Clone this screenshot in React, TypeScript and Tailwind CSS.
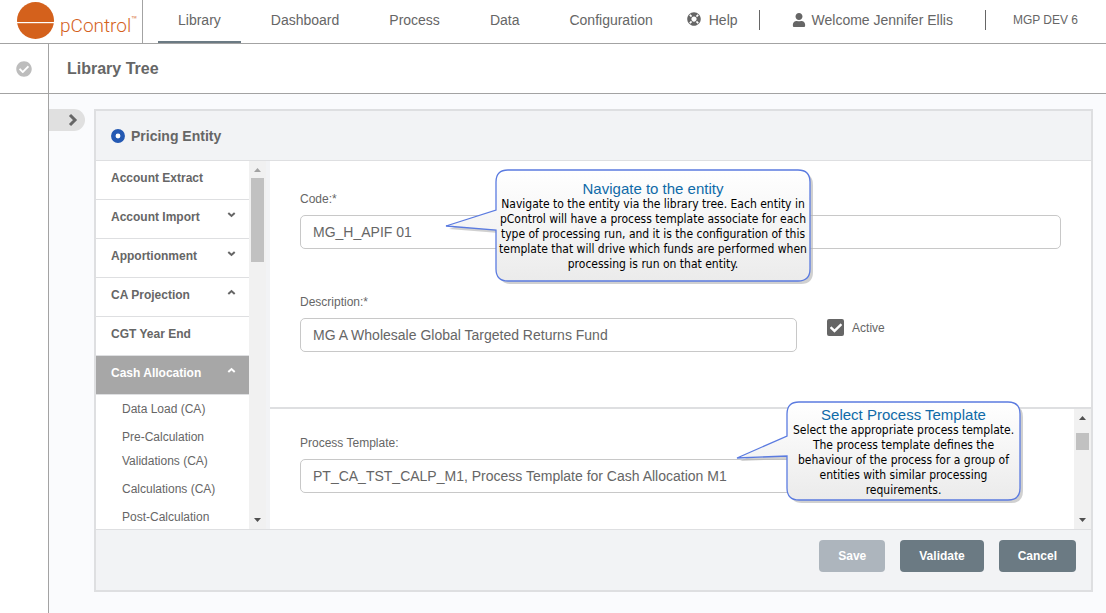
import { useState, type ReactNode } from "react";
import { FaCheck, FaCheckCircle, FaLifeRing, FaUser } from "react-icons/fa";

const NAV = ["Library", "Dashboard", "Process", "Data", "Configuration"];

type TreeItem = { label: string; state?: "open" | "closed"; active?: boolean };

const TREE: TreeItem[] = [
  { label: "Account Extract" },
  { label: "Account Import", state: "closed" },
  { label: "Apportionment", state: "closed" },
  { label: "CA Projection", state: "open" },
  { label: "CGT Year End" },
  { label: "Cash Allocation", state: "open", active: true },
];

const CHILDREN = ["Data Load (CA)", "Pre-Calculation Validations (CA)", "Calculations (CA)", "Post-Calculation"];

function Logo() {
  return (
    <a href="#home" className="flex w-[143px] shrink-0 items-start border-r border-[#a3a3a3] pl-[17px] pt-0.5">
      <svg width="38" height="38" viewBox="0 0 38 38" aria-hidden="true" className="shrink-0">
        <circle cx="18.5" cy="18.5" r="18.5" fill="#d4611c" />
        <rect x="0" y="20" width="38" height="1.2" fill="#fff" />
      </svg>
      <span className="flex items-start pl-[5px] pt-2 font-['Roboto',sans-serif] text-[19px] font-light leading-8 text-[#d4611c]">
        pControl<span className="text-[10px] leading-5">™</span>
      </span>
    </a>
  );
}

function Header() {
  return (
    <header className="flex h-11 shrink-0 border-b border-[#a3a3a3] bg-white text-sm whitespace-nowrap">
      <Logo />
      <nav className="ml-[15px] flex gap-2.5">
        {NAV.map((item, i) => (
          <a
            key={item}
            href={`#${item.toLowerCase()}`}
            className={
              i === 0
                ? "border-b-2 border-[#6b7a83] px-5 pt-2.5 leading-5"
                : "border-b-2 border-transparent px-5 pt-2.5 leading-5"
            }
          >
            {item}
          </a>
        ))}
      </nav>
      <div className="ml-3.5 flex flex-1 items-start pt-2.5 leading-5">
        <a href="#help" className="flex gap-2">
          <FaLifeRing className="mt-0.5 size-3.5" />
          Help
        </a>
        <span className="ml-[21px] h-5 w-px bg-[#666]" />
        <a href="#account" className="ml-8 flex gap-1.5">
          <FaUser className="mt-[3px] size-3.5" />
          Welcome Jennifer Ellis
        </a>
        <span className="ml-8 h-5 w-px bg-[#666]" />
        <span className="ml-[27px] text-xs leading-5">MGP DEV 6</span>
      </div>
    </header>
  );
}

function ScrollTrack({ thumb, topMuted }: { thumb: ReactNode; topMuted?: boolean }) {
  return (
    <div className="flex w-[17px] shrink-0 flex-col items-center bg-[#f1f1f1]" aria-hidden="true">
      <svg width="17" height="17" viewBox="0 0 17 17">
        <path d="M5 11h7L8.500 7z" fill={topMuted ? "#a3a3a3" : "#505050"} />
      </svg>
      {thumb}
      <svg width="17" height="17" viewBox="0 0 17 17" className="mt-auto">
        <path d="M5 6h7L8.500 10z" fill="#505050" />
      </svg>
    </div>
  );
}

function TreeArrow({ open }: { open: boolean }) {
  return (
    <svg width="9" height="9" viewBox="0 0 9 9" className="mt-px" aria-hidden="true">
      <path
        d={open ? "M1.300 6L4.500 3L7.700 6" : "M1.300 3L4.500 6L7.700 3"}
        fill="none"
        stroke="currentColor"
        strokeWidth="2"
      />
    </svg>
  );
}

function Tree() {
  return (
    <div className="flex w-[174px] shrink-0 border-r-4 border-[#f2f3f5] bg-white">
      <ul className="flex-1 text-xs">
        {TREE.map(({ label, state, active }) => (
          <li key={label}>
            <button
              type="button"
              className={
                active
                  ? "flex h-[39px] w-full justify-between border-b border-[#dedfe1] bg-[#a7a7a7] pr-[13px] pl-[15px] pt-[9px] font-bold leading-4 text-white"
                  : "flex h-[39px] w-full justify-between border-b border-[#dedfe1] pr-[13px] pl-[15px] pt-[9px] font-bold leading-4"
              }
            >
              {label}
              {state && <TreeArrow open={state === "open"} />}
            </button>
          </li>
        ))}
        {CHILDREN.map((label) => (
          <li key={label} className="py-0.5 pl-[26px] pr-5 leading-6 last:pb-0">
            <a href="#entity">{label}</a>
          </li>
        ))}
      </ul>
      <ScrollTrack topMuted thumb={<div className="h-[84px] w-[13px] bg-[#c1c1c1]" />} />
    </div>
  );
}

function Field({ id, label, value }: { id: string; label: string; value: string }) {
  const [text, setText] = useState(value);
  return (
    <div className="flex flex-col gap-2">
      <label htmlFor={id} className="text-xs leading-4">
        {label}
      </label>
      <input
        id={id}
        value={text}
        onChange={(e) => setText(e.target.value)}
        className="h-[34px] w-full rounded-[5px] border border-[#c8c8c8] bg-white px-3 text-sm outline-none"
      />
    </div>
  );
}

function Callout({
  title,
  children,
  place,
  pad,
  width,
  height,
  outline,
}: {
  title: string;
  children: ReactNode;
  place: string;
  pad: string;
  width: number;
  height: number;
  outline: string;
}) {
  const id = title.replace(/ /g, "-");
  return (
    <aside className={`absolute z-10 ${place}`}>
      <svg
        className="absolute top-0 left-0 overflow-visible"
        width={width}
        height={height}
        viewBox={`0 0 ${width} ${height}`}
        aria-hidden="true"
      >
        <defs>
          <linearGradient id={id} x1="0" y1="0" x2="0" y2="1">
            <stop offset="0" stopColor="#fff" />
            <stop offset="1" stopColor="#ebebeb" />
          </linearGradient>
        </defs>
        <path d={outline} fill="#b0b0b0" fillOpacity="0.6" transform="translate(3 3)" />
        <path d={outline} fill={`url(#${id})`} stroke="#5b7be0" strokeWidth="1.3" />
      </svg>
      <div className={`relative text-center ${pad}`}>
        <h3 className="text-[15px] leading-4 text-[#0f6aa8]">{title}</h3>
        <p className="font-['DejaVu_Sans_Condensed','Noto_Sans',sans-serif] text-xs leading-[15px] whitespace-nowrap text-black">
          {children}
        </p>
      </div>
    </aside>
  );
}

function EntityForm() {
  const [active, setActive] = useState(true);
  return (
    <div className="relative flex min-w-0 flex-1 flex-col bg-white">
      <section className="border-b-2 border-[#dedfe1] px-[30px] pt-[30px] pb-[55px]">
        <Field id="code" label="Code:*" value="MG_H_APIF 01" />
        <div className="mt-[45px] grid grid-cols-[17fr_8fr] gap-[30px]">
          <Field id="description" label="Description:*" value="MG A Wholesale Global Targeted Returns Fund" />
          <label className="relative flex items-center gap-2 self-start pt-[25px] text-xs leading-4">
            <span className="grid">
              <input
                type="checkbox"
                checked={active}
                onChange={(e) => setActive(e.target.checked)}
                className="col-start-1 row-start-1 size-[17px] appearance-none rounded-xs border-2 border-[#666] checked:bg-[#666]"
              />
              {active && (
                <FaCheck className="pointer-events-none col-start-1 row-start-1 size-3 place-self-center text-white" />
              )}
            </span>
            Active
          </label>
        </div>
      </section>
      <section className="flex flex-1">
        <div className="grid flex-1 grid-cols-[17fr_8fr] gap-[30px] pt-[26px] pr-[13px] pb-9 pl-[30px]">
          <Field
            id="template"
            label="Process Template:"
            value="PT_CA_TST_CALP_M1, Process Template for Cash Allocation M1"
          />
        </div>
        <ScrollTrack thumb={<div className="mt-[7px] h-[17px] w-[13px] bg-[#c1c1c1]" />} />
      </section>

      <Callout
        title="Navigate to the entity"
        place="left-[226px] top-[9px] h-[111px] w-[314px]"
        pad="pt-[11px]"
        width={314}
        height={111}
        outline="M12 0H302Q314 0 314 12V99Q314 111 302 111H12Q0 111 0 99V60L-50 56L0 40V12Q0 0 12 0Z"
      >
        Navigate to the entity via the library tree. Each entity in
        <br />
        pControl will have a process template associate for each
        <br />
        type of processing run, and it is the configuration of this
        <br />
        template that will drive which funds are performed when
        <br />
        processing is run on that entity.
      </Callout>
      <Callout
        title="Select Process Template"
        place="left-[517px] top-[241px] h-[98px] w-[233px]"
        pad="pt-[5px]"
        width={233}
        height={98}
        outline="M12 0H221Q233 0 233 12V86Q233 98 221 98H12Q0 98 0 86V54L-50 56L0 34V12Q0 0 12 0Z"
      >
        Select the appropriate process template.
        <br />
        The process template defines the
        <br />
        behaviour of the process for a group of
        <br />
        entities with similar processing
        <br />
        requirements.
      </Callout>
    </div>
  );
}

export default function App() {
  return (
    <div className="flex min-h-screen flex-col bg-[#fafbfd] font-['Liberation_Sans',Arial,sans-serif] text-[#666]">
      <Header />
      <div className="flex flex-1">
        <div className="flex w-[49px] shrink-0 flex-col border-r border-[#a3a3a3] bg-white">
          <div className="flex h-[50px] items-center justify-center border-b border-[#a3a3a3]">
            <FaCheckCircle className="size-4 text-[#bdbdbd]" />
          </div>
        </div>
        <div className="flex min-w-0 flex-1 flex-col">
          <div className="flex h-[50px] shrink-0 items-center border-b border-[#a3a3a3] bg-white px-[18px]">
            <h1 className="text-base font-bold">Library Tree</h1>
          </div>
          <main className="flex items-start gap-[9px] pt-[15px] pr-[13px] pb-[21px]">
            <button
              type="button"
              aria-label="Expand library tree"
              className="flex h-[22px] w-9 shrink-0 items-center justify-end rounded-r-full bg-[#e0e0e0] pr-[7px]"
            >
              <svg width="10" height="14" viewBox="0 0 10 14" aria-hidden="true">
                <path d="M2 2L7 7L2 12" fill="none" stroke="currentColor" strokeWidth="3" />
              </svg>
            </button>
            <div className="min-w-0 flex-1 border-2 border-[#dedfe1] bg-[#f2f3f5]">
              <div className="flex h-[50px] items-center gap-1.5 border-b border-[#dedfe1] px-[15px]">
                <svg width="14" height="14" viewBox="0 0 14 14" aria-hidden="true">
                  <circle cx="7" cy="7" r="4.700" fill="#fff" stroke="#2459b3" strokeWidth="4.500" />
                </svg>
                <h2 className="text-sm font-bold">Pricing Entity</h2>
              </div>
              <div className="flex">
                <Tree />
                <EntityForm />
              </div>
              <div className="flex justify-end gap-[15px] border-t border-[#dedfe1] px-[15px] pt-2.5 pb-[18px] text-xs font-bold text-white">
                <button type="button" disabled className="h-8 rounded-sm bg-[#adb5bd] px-[19px]">
                  Save
                </button>
                <button type="button" className="h-8 rounded-sm bg-[#6b7a83] px-[19px]">
                  Validate
                </button>
                <button type="button" className="h-8 rounded-sm bg-[#6b7a83] px-[19px]">
                  Cancel
                </button>
              </div>
            </div>
          </main>
        </div>
      </div>
    </div>
  );
}
